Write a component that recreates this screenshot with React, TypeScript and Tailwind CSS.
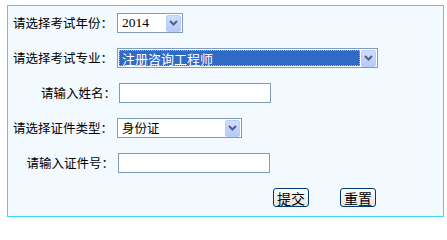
import React from "react";

const Arrow = () => (
  <div className="w-[15px] h-[17px] mr-px rounded-[2px] border border-[#b9cdf8] bg-gradient-to-b from-[#d0ddfd] to-[#b6c9f7] flex items-center justify-center">
    <svg width="9" height="6" viewBox="0 0 9 6">
      <path d="M1 1 L4.5 4.5 L8 1" stroke="#4d6185" strokeWidth="2" fill="none" />
    </svg>
  </div>
);

const Label = ({ text, w }: { text: string; w: string }) => (
  <div className={`${w} text-right text-[12.5px] leading-[20px] text-black shrink-0`}>{text}</div>
);

export default function App() {
  return (
    <div className="w-[447px] h-[221px] bg-white pt-[5px] pl-[7px]" style={{ fontFamily: '"Noto Sans CJK SC", "Noto Sans", sans-serif' }}>
      <div className="w-[437px] h-[212px] border border-t-[#74b9e8] border-l-[#74b9e8] border-r-[#3ad6f4] border-b-[#3ad6f4] bg-[#f2f9ff] flex flex-col gap-[15px] pt-[7px]">
        <div className="flex items-center h-[20px]">
          <Label text="请选择考试年份：" w="w-[105px]" />
          <div className="ml-[4px] w-[66px] h-[20px] border border-[#7f9db9] bg-white flex items-center justify-between">
            <span className="pl-[4px] text-[13.5px] leading-none text-black" style={{ fontFamily: '"Liberation Serif", serif' }}>2014</span>
            <Arrow />
          </div>
        </div>
        <div className="flex items-center h-[20px]">
          <Label text="请选择考试专业：" w="w-[105px]" />
          <div className="ml-[4px] w-[261px] h-[20px] border border-[#7f9db9] bg-white flex items-center">
            <div className="ml-px w-[241px] h-[16px] bg-[#316ac5] border border-dotted border-[#e8a33c] flex items-center">
              <span className="pl-[2px] text-[13px] leading-none text-white">注册咨询工程师</span>
            </div>
            <div className="ml-auto"><Arrow /></div>
          </div>
        </div>
        <div className="flex items-center h-[20px]">
          <Label text="请输入姓名：" w="w-[108px]" />
          <div className="ml-[3px] w-[152px] h-[20px] border border-[#7f9db9] bg-white" />
        </div>
        <div className="flex items-center h-[20px]">
          <Label text="请选择证件类型：" w="w-[105px]" />
          <div className="ml-[4px] w-[125px] h-[20px] border border-[#7f9db9] bg-white flex items-center justify-between">
            <span className="pl-[4px] text-[12.5px] leading-none text-black">身份证</span>
            <Arrow />
          </div>
        </div>
        <div className="flex items-center h-[20px]">
          <Label text="请输入证件号：" w="w-[106px]" />
          <div className="ml-[4px] w-[152px] h-[20px] border border-[#7f9db9] bg-white" />
        </div>
        <div className="flex items-center ml-[265px] gap-[31px]">
          <button className="w-[36px] h-[19px] rounded-[3px] border border-[#003c74] bg-gradient-to-b from-white to-[#e6e4db] text-[14px] leading-none text-black flex items-center justify-center p-0">提交</button>
          <button className="w-[36px] h-[19px] rounded-[3px] border border-[#003c74] bg-gradient-to-b from-white to-[#e6e4db] text-[14px] leading-none text-black flex items-center justify-center p-0">重置</button>
        </div>
      </div>
    </div>
  );
}
